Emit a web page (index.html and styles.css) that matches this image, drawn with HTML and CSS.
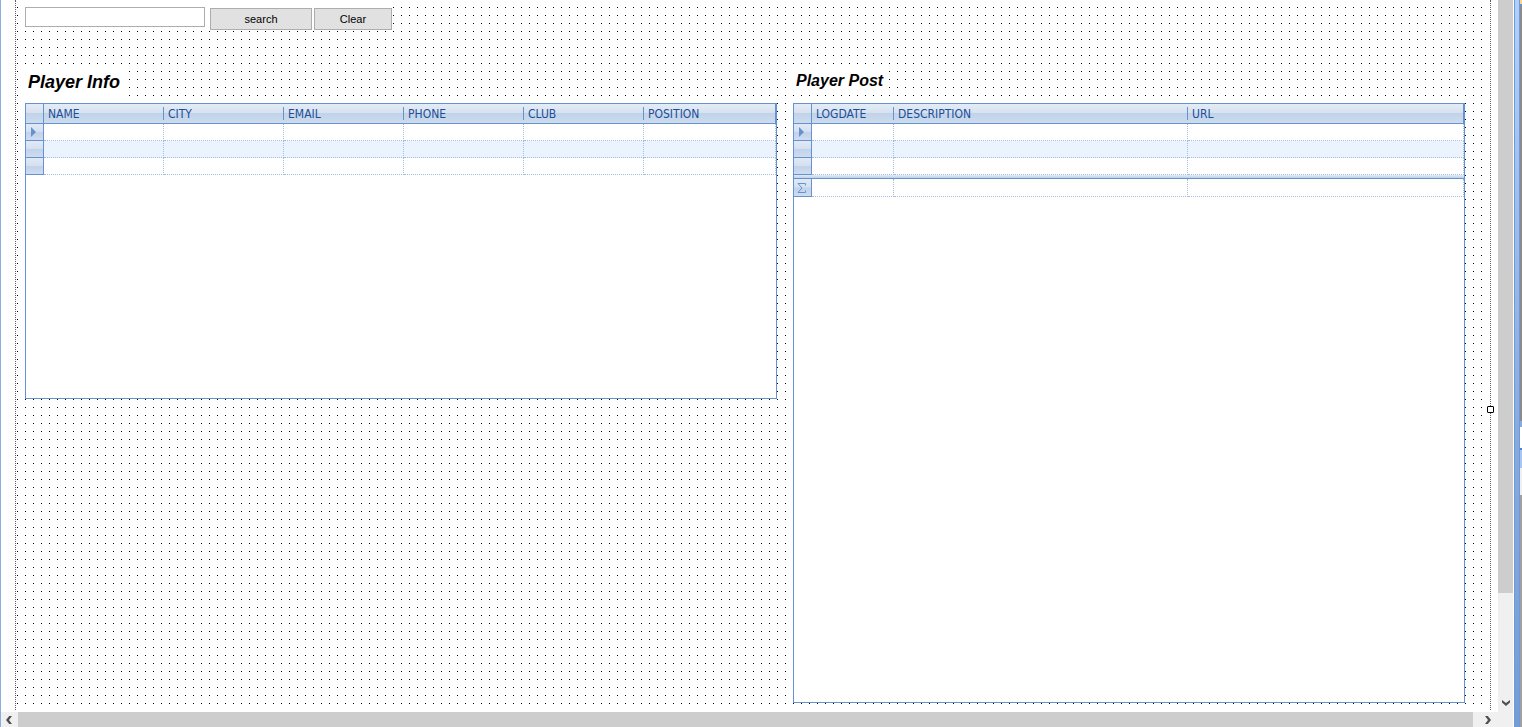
FILE: index.html
```html
<!DOCTYPE html>
<html lang="en">
<head>
<meta charset="utf-8">
<title>Player form designer</title>
<link rel="stylesheet" href="styles.css">
</head>
<body>
<div class="window">
  <main class="workspace">
    <form class="form-surface">
      <div class="toolbar">
        <input class="search-box" type="text" aria-label="Search players">
        <div class="buttons">
          <button class="btn btn-search" type="button">search</button>
          <button class="btn btn-clear" type="button">Clear</button>
        </div>
      </div>
      <div class="panels">
        <section class="panel">
          <div class="title-row"><h2 class="title title-info">Player Info</h2></div>
          <div class="grid grid-info">
            <table class="data">
              <colgroup><col class="c-mark"><col class="c-std"><col class="c-std"><col class="c-std"><col class="c-std"><col class="c-std"><col></colgroup>
              <thead><tr><th class="mark"></th><th>NAME</th><th>CITY</th><th>EMAIL</th><th>PHONE</th><th>CLUB</th><th>POSITION</th></tr></thead>
              <tbody>
                <tr><td class="mark"><svg class="arrow" viewBox="0 0 5 10"><path d="M0 0L5 5L0 10Z"/></svg></td><td></td><td></td><td></td><td></td><td></td><td></td></tr>
                <tr class="alt"><td class="mark"></td><td></td><td></td><td></td><td></td><td></td><td></td></tr>
                <tr><td class="mark"></td><td></td><td></td><td></td><td></td><td></td><td></td></tr>
              </tbody>
            </table>
          </div>
        </section>
        <section class="panel">
          <div class="title-row"><h2 class="title title-post">Player Post</h2></div>
          <div class="grid grid-post">
            <table class="data">
              <colgroup><col class="c-mark"><col class="c-date"><col class="c-desc"><col></colgroup>
              <thead><tr><th class="mark"></th><th>LOGDATE</th><th>DESCRIPTION</th><th>URL</th></tr></thead>
              <tbody>
                <tr><td class="mark"><svg class="arrow" viewBox="0 0 5 10"><path d="M0 0L5 5L0 10Z"/></svg></td><td></td><td></td><td></td></tr>
                <tr class="alt"><td class="mark"></td><td></td><td></td><td></td></tr>
                <tr><td class="mark"></td><td></td><td></td><td></td></tr>
              </tbody>
              <tfoot>
                <tr class="divider"><td colspan="4"></td></tr>
                <tr class="total"><td class="mark"><svg class="sigma" viewBox="0 0 9 10"><path d="M8.5 2.5V.5H1L5 5L1 9.5H8.5V7.5"/></svg></td><td></td><td></td><td></td></tr>
              </tfoot>
            </table>
          </div>
        </section>
      </div>
      <span class="handle"></span>
    </form>
  </main>
  <div class="vscroll">
    <div class="vthumb"></div>
    <svg class="chev-down" viewBox="0 0 8 6"><path d="M0 0L4 3L8 0V2.5L4 6L0 2.5Z"/></svg>
  </div>
  <div class="hscroll">
    <svg class="chev-side" viewBox="0 0 6 8"><path d="M6 0L3 4L6 8H3.2L0 4L3.2 0Z"/></svg>
    <div class="hthumb"></div>
    <svg class="chev-side" viewBox="0 0 6 8"><path d="M0 0L3 4L0 8H2.8L6 4L2.8 0Z"/></svg>
  </div>
  <div class="frame-edge"></div>
  <div class="side-pane"></div>
</div>
</body>
</html>
```
FILE: styles.css
```css
* { box-sizing: border-box; }

body {
  margin: 0;
  background: #fff;
  font-family: "Liberation Sans", Arial, sans-serif;
}

.window {
  display: grid;
  grid-template-columns: 1fr 16px 6px 2px;
  grid-template-rows: 1fr 15px;
  height: 100vh;
  border-left: 1px solid #8aacdf;
  overflow: hidden;
}

.workspace {
  grid-area: 1 / 1;
  display: flex;
  padding: 0 7px 2px 14px;
}

/* Design surface with an 8px snap grid */
.form-surface {
  position: relative;
  flex: 1;
  display: flex;
  flex-direction: column;
  padding: 7px 25px 7px 9px;
  border: dotted #606060;
  border-width: 0 1px;
  background-image:
    linear-gradient(#fff, #fff),
    linear-gradient(to right, transparent 1px, #fff 1px),
    linear-gradient(#000 1px, #fff 1px);
  background-size: 6px 100%, 8px 8px, 8px 8px;
  background-position: right top, 1px 0, 0 7px;
  background-repeat: no-repeat, repeat, repeat;
  background-clip: padding-box;
}

.toolbar {
  display: flex;
  gap: 5px;
  height: 59px;
}

.search-box {
  width: 180px;
  height: 20px;
  border: 1px solid #abadb3;
  background: #fff;
}

.buttons {
  display: flex;
  gap: 2px;
  padding-top: 1px;
}

.btn {
  height: 22px;
  padding: 0;
  border: 1px solid #adadad;
  background: #e1e1e1;
  box-shadow: 0 0 0 1px #fff;
  color: #000;
  font: 11px "Liberation Sans", Arial, sans-serif;
}

.btn-search { width: 102px; }
.btn-clear { width: 78px; }

.panels {
  flex: 1;
  display: grid;
  grid-template-columns: 752fr 672fr;
  gap: 16px;
}

.panel {
  display: flex;
  flex-direction: column;
  min-width: 0;
}

.title-row { height: 37px; }

.title {
  display: inline-block;
  margin: 0;
  padding: 0 4px 0 3px;
  background: #fff;
  color: #000;
  font-style: italic;
  font-weight: bold;
}

.title-info { font-size: 18px; line-height: 32px; padding-right: 8px; }
.title-post { font-size: 16px; line-height: 28px; padding-top: 1px; }

.grid {
  border: 1px solid #6593cf;
  background: #fff;
}

.grid-info { height: 296px; }
.grid-post { flex: 1; }

.data {
  width: 100%;
  table-layout: fixed;
  border-collapse: separate;
  border-spacing: 0;
}

.c-mark { width: 18px; }
.c-std { width: 120px; }
.c-date { width: 82px; }
.c-desc { width: 294px; }

.data th {
  position: relative;
  height: 20px;
  padding: 2px 0 0 4px;
  border-bottom: 1px solid #6593cf;
  background: linear-gradient(#e4ecf6, #d7e2ef 48%, #c1d3e9 50%, #cddcee);
  color: #204d98;
  font: 12px/17px "DejaVu Sans Condensed", "Noto Sans", sans-serif;
  text-align: left;
}

.data th:not(.mark):not(:last-child)::after {
  content: "";
  position: absolute;
  top: 3px;
  right: 0;
  width: 1px;
  height: 13px;
  background: #6593cf;
}

.data th:last-child { border-right: 1px solid #6593cf; }

.data td {
  height: 17px;
  padding: 0;
  border: dotted #a3bedb;
  border-width: 0 1px 1px 0;
}

.alt td { background: #ebf3ff; }

.data .mark {
  padding: 0;
  border-right: 1px solid #6593cf;
  border-bottom: 1px solid #6593cf;
}

.data td.mark {
  background: linear-gradient(#e2e9f5, #d5e0f0 48%, #c1d2ea 52%, #cfdcf0);
  line-height: 0;
}

.arrow {
  width: 5px;
  height: 10px;
  margin-left: 5px;
  fill: #6593cf;
}

.sigma {
  width: 9px;
  height: 10px;
  margin-left: 3px;
  fill: none;
  stroke: #6593cf;
}

.data .divider td {
  height: 4px;
  border: 0;
  border-bottom: 1px solid #6593cf;
  background: linear-gradient(#e3ebf5, #c0d2e8);
}

.data .total td { height: 18px; }

/* Resize handle on the surface's right border */
.handle {
  position: absolute;
  top: 406px;
  right: -4px;
  width: 7px;
  height: 7px;
  border: 1px solid #000;
  border-radius: 1px;
  background: #fff;
}

.vscroll {
  grid-area: 1 / 2;
  display: flex;
  flex-direction: column;
  justify-content: space-between;
  align-items: center;
  padding-bottom: 6px;
  border-right: 1px solid #fff;
  background: #f0f0f0;
}

.vthumb {
  width: 100%;
  height: 84%;
  background: #cdcdcd;
}

.chev-down { width: 8px; height: 6px; fill: #505050; }
.chev-side { width: 6px; height: 8px; fill: #505050; }

.hscroll {
  grid-area: 2 / 1 / 3 / 3;
  display: flex;
  align-items: center;
  gap: 12px;
  padding: 0 22px 0 5px;
  border-right: 1px solid #fff;
  background: #f0f0f0;
}

.hthumb {
  flex: 1;
  height: 100%;
  margin-left: -6px;
  background: #cdcdcd;
}

.frame-edge {
  grid-area: 1 / 3 / 3 / 4;
  border: solid #6e98d8;
  border-width: 0 1px;
  background: linear-gradient(#b2d0f7, #9ebdea 30%, #88abde 60%, #749dd5);
}

.side-pane {
  grid-area: 1 / 4 / 3 / 5;
  background: linear-gradient(#ffd58c 4px, #6593cf 4px 6px, #8b8b8b 6px 421px, #88abde 421px 427px, #fff 427px 448px, #4d82d0 448px 450px, #a9c6ef 450px 468px, #f0f0f0 468px 495px, #a0a0a0 495px);
}
```
